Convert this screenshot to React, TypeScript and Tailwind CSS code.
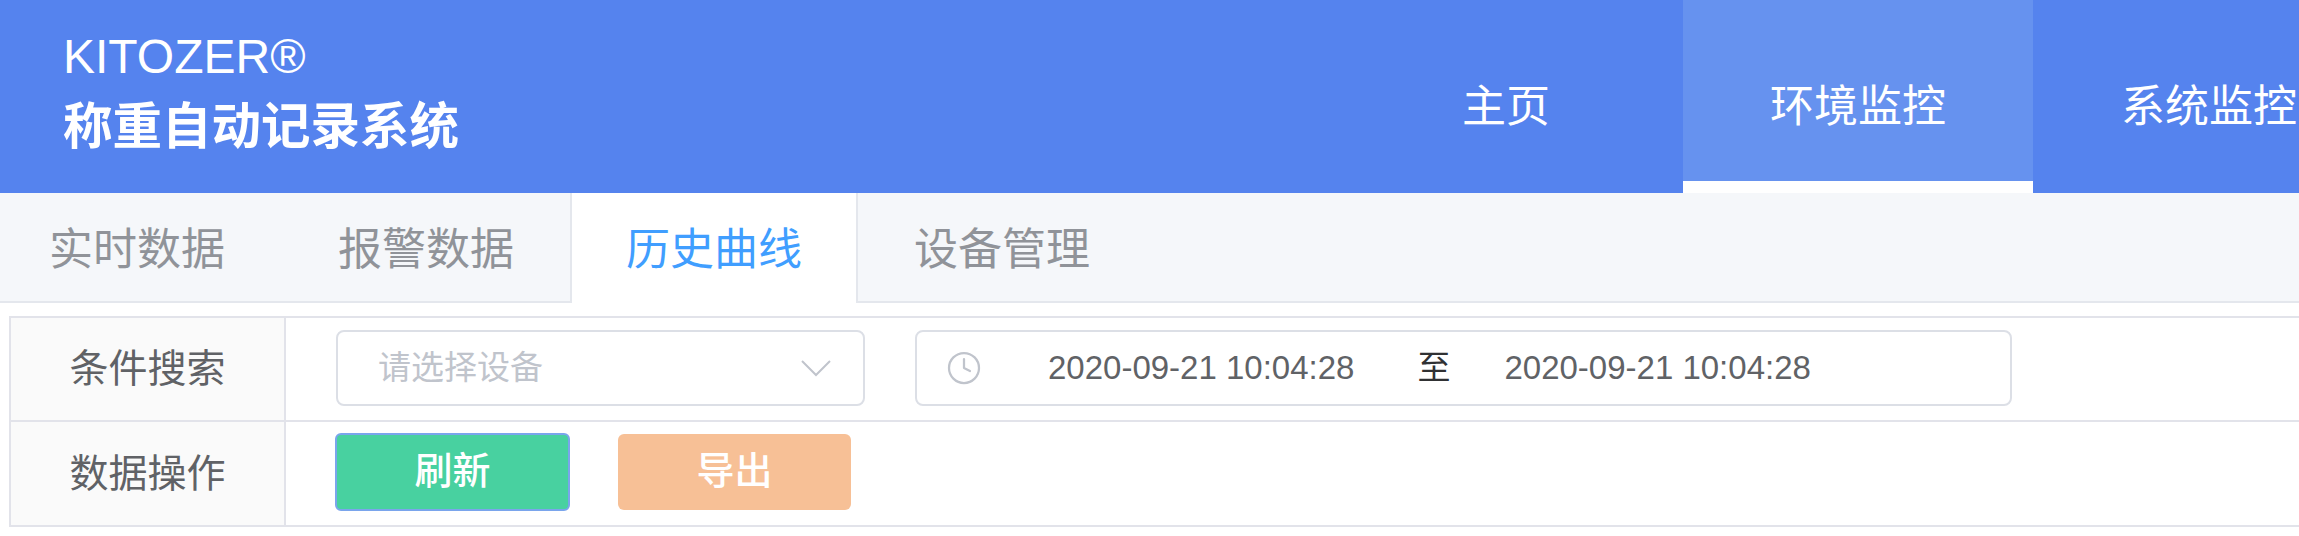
import { Clock } from 'lucide-react'

const font = "[font-family:'Liberation_Sans','Noto_Sans_CJK_SC',sans-serif]"

export default function App() {
  return (
    <div className={`w-[2299px] h-[536px] overflow-hidden bg-white ${font}`}>
      {/* Header */}
      <header className="flex h-[193px] bg-[#5583ee] text-white">
        <div className="w-[1376px] shrink-0 pl-[63px] pt-[30px]">
          <div className="text-[48px] leading-[54px]">KITOZER®</div>
          <div className="mt-[11px] text-[49.5px] leading-[64px] font-bold whitespace-nowrap">称重自动记录系统</div>
        </div>
        <nav className="flex shrink-0 whitespace-nowrap text-[44px] leading-[64px]">
          <a className="pt-[75px] pl-[86px] pr-[89px] mr-[44px]">主页</a>
          <a className="h-[193px] pt-[75px] px-[87px] bg-[#6692ef] border-b-[12px] border-white">环境监控</a>
          <a className="pt-[75px] px-[88px]">系统监控</a>
        </nav>
      </header>

      {/* Tabs */}
      <div className="flex h-[110px] bg-[#f5f7fa] border-b-2 border-[#e4e7ed] text-[44px] leading-[114px] text-[#909399]">
        <div className="pl-[49px] pr-[57px]">实时数据</div>
        <div className="px-[56px]">报警数据</div>
        <div className="h-[110px] pl-[54px] pr-[54px] bg-white border-x-2 border-[#e4e7ed] text-[#409eff]">历史曲线</div>
        <div className="pl-[56px]">设备管理</div>
      </div>

      {/* Filter table */}
      <div className="mt-[13px] ml-[9px] border-y-2 border-l-2 border-[#e2e3ea] text-[#606266]">
        <div className="flex h-[104px] border-b-2 border-[#e2e3ea]">
          <div className="w-[275px] shrink-0 bg-[#fafafa] border-r-2 border-[#e2e3ea] text-center text-[39px] leading-[102px]">条件搜索</div>
          <div className="flex items-center pl-[50px] pb-[2px]">
            <div className="flex h-[76px] w-[529px] items-center justify-between rounded-[8px] border-2 border-[#dcdfe6] pl-[40px] pr-[31px] text-[33px] text-[#c0c4cc]">
              <span>请选择设备</span>
              <svg className="w-[32px] h-[18px]" viewBox="0 0 32 18" fill="none" stroke="currentColor" strokeWidth="2">
                <path d="M2 2l14 14L30 2" />
              </svg>
            </div>
            <div className="ml-[50px] flex h-[76px] w-[1097px] items-center rounded-[8px] border-2 border-[#dcdfe6] pl-[29px] text-[33px] whitespace-nowrap">
              <Clock className="w-[36px] h-[36px] text-[#c0c4cc]" strokeWidth={1.5} />
              <span className="ml-[66px]">2020-09-21 10:04:28</span>
              <span className="ml-[63px] text-[#303133]">至</span>
              <span className="ml-[54px]">2020-09-21 10:04:28</span>
            </div>
          </div>
        </div>
        <div className="flex h-[103px]">
          <div className="w-[275px] shrink-0 bg-[#fafafa] border-r-2 border-[#e2e3ea] text-center text-[39px] leading-[103px]">数据操作</div>
          <div className="flex items-center pl-[49px] pb-[4px]">
            <button className="h-[78px] w-[235px] rounded-[6px] border-2 border-[#7aa5ec] bg-[#48d1a0] text-[38px] font-medium text-white">刷新</button>
            <button className="ml-[48px] h-[76px] w-[233px] rounded-[6px] bg-[#f7c096] text-[38px] font-medium text-white">导出</button>
          </div>
        </div>
      </div>
    </div>
  )
}
